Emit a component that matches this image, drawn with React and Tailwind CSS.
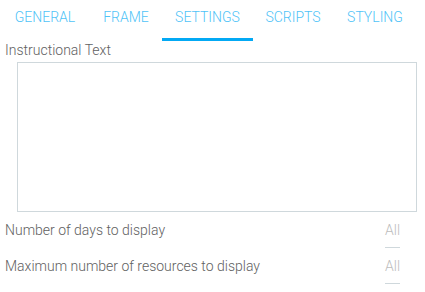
export default function App() {
    const tabs = [
        { label: 'GENERAL', w: 'w-[90px]' },
        { label: 'FRAME', w: 'w-[72px]' },
        { label: 'SETTINGS', w: 'w-[91px]', active: true },
        { label: 'SCRIPTS', w: 'w-[80px]' },
        { label: 'STYLING', w: 'w-[84px]' },
    ];

    const rows = ['Number of days to display', 'Maximum number of resources to display'];

    return (
        <div className="h-[292px] w-[425px] overflow-hidden bg-white font-['Roboto',sans-serif] font-light">
            {/* Tabs */}
            <div className="flex h-[41px]">
                {tabs.map((t) => (
                    <div
                        key={t.label}
                        className={`${t.w} flex flex-col items-center justify-between`}
                    >
                        <span className="pt-[9px] text-[14px] leading-[16px] text-[#4fc3f7]">
                            {t.label}
                        </span>
                        <div className={`h-[3px] w-full ${t.active ? 'bg-[#03a9f4]' : ''}`} />
                    </div>
                ))}
            </div>

            {/* Instructional text */}
            <div className="px-[5px] pt-[1px] text-[14px] leading-[16px] text-[#616161]">
                Instructional Text
            </div>
            <div className="mt-[4px] ml-[17px] h-[150px] w-[400px] border border-[#cfd8dc]" />

            {/* Settings rows */}
            <div className="mt-[6px] flex flex-col">
                {rows.map((r) => (
                    <div key={r} className="flex h-[36px] justify-between pl-[5px] pr-[25px]">
                        <span className="pt-[4px] text-[14px] leading-[16px] text-[#616161]">{r}</span>
                        <div className="flex w-[15px] flex-col pt-[4px]">
                            <span className="text-[14px] leading-[16px] text-[#bdbdbd]">All</span>
                            <div className="mt-[9px] h-px w-[15px] bg-[#cfd8dc]" />
                        </div>
                    </div>
                ))}
            </div>
        </div>
    );
}
